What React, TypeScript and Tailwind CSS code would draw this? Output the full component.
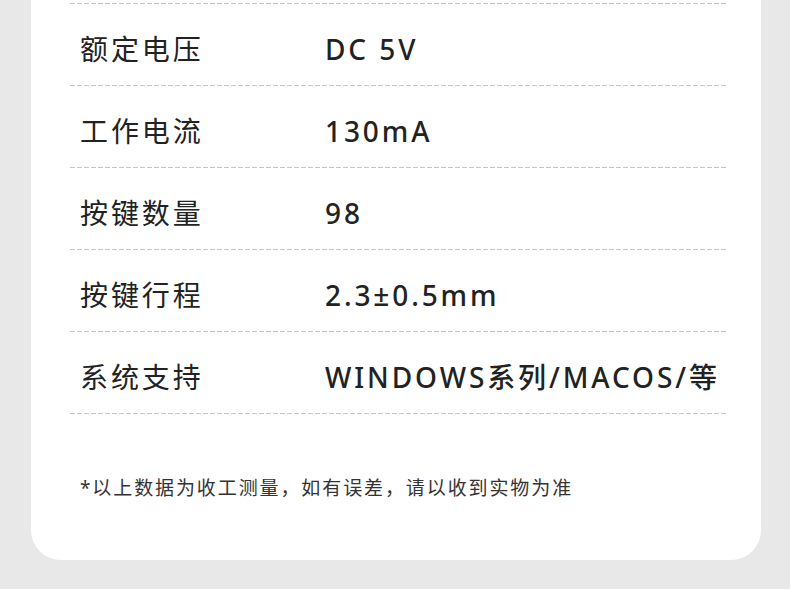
const specs = [
  { label: "额定电压", value: "DC 5V" },
  { label: "工作电流", value: "130mA" },
  { label: "按键数量", value: "98" },
  { label: "按键行程", value: "2.3±0.5mm" },
  { label: "系统支持", value: "WINDOWS系列/MACOS/等" },
]

function Dashed() {
  return (
    <div className="h-px w-full bg-[repeating-linear-gradient(to_right,#c6c6c6_0,#c6c6c6_5px,transparent_5px,transparent_7px)]" />
  )
}

export default function App() {
  return (
    <div className="w-[790px] h-[589px] overflow-hidden bg-[#e8e8e8] font-['Noto_Sans','Noto_Sans_CJK_SC',sans-serif]">
      <div className="ml-[31px] w-[730px] h-[560px] bg-white rounded-b-[30px] pt-[3px] pl-[39px] pr-[35px]">
        <Dashed />
        {specs.map((s) => (
          <div key={s.label}>
            <div className="flex items-center h-[81px] pt-[9px] text-[28px] leading-[28px] tracking-[2.9px] text-[#222]">
              <div className="w-[255px] pl-[10px]">{s.label}</div>
              <div className="font-medium">{s.value}</div>
            </div>
            <Dashed />
          </div>
        ))}
        <p className="mt-[65px] pl-[10px] text-[19px] leading-[19px] tracking-[1.9px] text-[#333]">
          *以上数据为收工测量，如有误差，请以收到实物为准
        </p>
      </div>
    </div>
  )
}
